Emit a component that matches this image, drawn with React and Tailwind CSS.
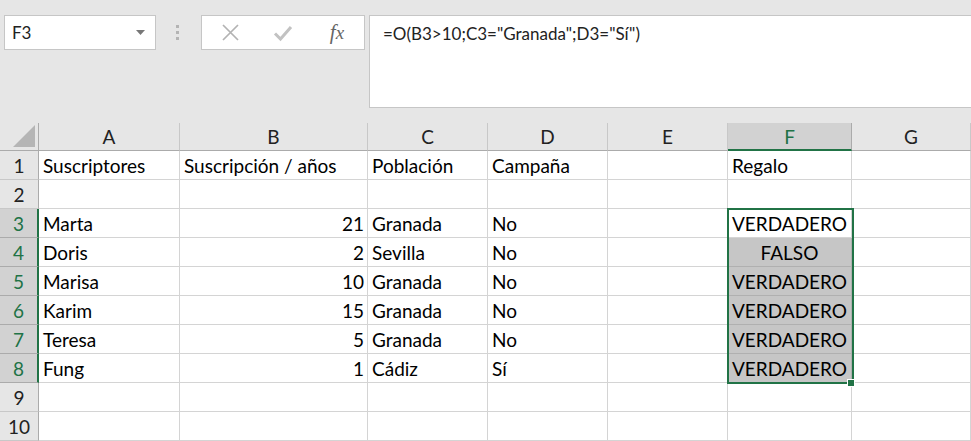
import React from 'react';

const cols = [
    { key: 'A', w: 'w-[141px]' },
    { key: 'B', w: 'w-[188px]' },
    { key: 'C', w: 'w-[120px]' },
    { key: 'D', w: 'w-[120px]' },
    { key: 'E', w: 'w-[120px]' },
    { key: 'F', w: 'w-[124px]' },
    { key: 'G', w: 'w-[119px]' },
];

const rows = [
    ['Suscriptores', 'Suscripción / años', 'Población', 'Campaña', '', 'Regalo', ''],
    ['', '', '', '', '', '', ''],
    ['Marta', 21, 'Granada', 'No', '', 'VERDADERO', ''],
    ['Doris', 2, 'Sevilla', 'No', '', 'FALSO', ''],
    ['Marisa', 10, 'Granada', 'No', '', 'VERDADERO', ''],
    ['Karim', 15, 'Granada', 'No', '', 'VERDADERO', ''],
    ['Teresa', 5, 'Granada', 'No', '', 'VERDADERO', ''],
    ['Fung', 1, 'Cádiz', 'Sí', '', 'VERDADERO', ''],
    ['', '', '', '', '', '', ''],
    ['', '', '', '', '', '', ''],
];

const inSelection = (r) => r >= 3 && r <= 8;

export default function App() {
    return (
        <div className="w-[971px] h-[441px] overflow-hidden bg-white font-['Lato','Liberation_Sans',sans-serif] text-black">
            {/* formula bar area */}
            <div className="h-[123px] bg-[#e6e6e6] flex items-start pt-[15px] pl-[4px]">
                <div className="w-[152px] h-[35px] bg-white border border-[#c6c6c6] flex items-center justify-between pl-[7px] pr-[10px]">
                    <span className="text-[17px] text-[#222]">F3</span>
                    <svg width="9" height="5" viewBox="0 0 9 5"><path d="M0 0h9L4.5 5z" fill="#777" /></svg>
                </div>
                <div className="w-[45px] h-[35px] flex flex-col items-center justify-center gap-[3px] pr-[2px]">
                    <div className="w-[3px] h-[3px] bg-[#b4b4b4]" />
                    <div className="w-[3px] h-[3px] bg-[#b4b4b4]" />
                    <div className="w-[3px] h-[3px] bg-[#b4b4b4]" />
                </div>
                <div className="w-[164px] h-[35px] bg-white border border-[#c6c6c6] flex items-center">
                    <div className="w-[54px] flex justify-center pl-[2px]">
                        <svg width="19" height="19" viewBox="0 0 19 19"><path d="M2 2L17 17M17 2L2 17" stroke="#b3b3b3" strokeWidth="1.7" /></svg>
                    </div>
                    <div className="w-[54px] flex justify-center">
                        <svg width="20" height="18" viewBox="0 0 20 18"><path d="M2 9.5L7.5 15L18 3" stroke="#c2c2c2" strokeWidth="3" fill="none" /></svg>
                    </div>
                    <div className="w-[54px] flex justify-center">
                        <span className="font-['Liberation_Serif',serif] italic text-[21px] text-[#666] leading-none">f<span className="text-[19px]">x</span></span>
                    </div>
                </div>
                <div className="ml-[4px] flex-1 h-[93px] bg-white border border-[#c6c6c6] border-r-0 pl-[13px] pt-[5px]">
                    <span className="text-[17px] text-[#222]">=O(B3&gt;10;C3="Granada";D3="Sí")</span>
                </div>
            </div>

            {/* grid */}
            <div className="relative">
                <div className="flex h-[28px] bg-[#e6e6e6]">
                    <div className="w-[39px] h-full border-r border-b border-[#ababab] relative overflow-hidden">
                        <svg className="absolute right-[3px] bottom-[3px]" width="22" height="22" viewBox="0 0 22 22"><path d="M22 0V22H0z" fill="#b5b5b5" /></svg>
                    </div>
                    {cols.map((c) => (
                        <div
                            key={c.key}
                            className={`${c.w} h-full flex items-center justify-center pt-[2px] text-[19px] border-r ${
                                c.key === 'F'
                                    ? 'bg-[#d2d2d2] text-[#217346] border-r-[#ababab] border-b-2 border-b-[#217346]'
                                    : 'text-[#222] border-r-[#c8c8c8] border-b border-b-[#ababab]'
                            }`}
                        >
                            {c.key}
                        </div>
                    ))}
                </div>
                {rows.map((row, i) => {
                    const r = i + 1;
                    const sel = inSelection(r);
                    return (
                        <div key={r} className="flex h-[29px]">
                            <div
                                className={`w-[39px] h-full flex items-center justify-center pt-[2px] text-[19px] border-b ${
                                    sel
                                        ? 'bg-[#d2d2d2] text-[#217346] border-b-[#ababab] border-r-2 border-r-[#217346]'
                                        : 'bg-[#e6e6e6] text-[#222] border-b-[#c8c8c8] border-r border-r-[#ababab]'
                                }`}
                            >
                                {r}
                            </div>
                            {cols.map((c, j) => {
                                const v = row[j];
                                const isF = c.key === 'F';
                                const gray = isF && r >= 4 && r <= 8;
                                const align =
                                    typeof v === 'number' ? 'justify-end pr-[3px]' : isF && r >= 3 ? 'justify-center' : 'justify-start pl-[4px]';
                                return (
                                    <div
                                        key={c.key}
                                        className={`${c.w} h-full flex items-center pt-[3px] ${align} text-[19px] border-r border-b ${
                                            gray ? 'bg-[#c6c6c6] border-[#b0b0b0]' : 'border-[#d4d4d4]'
                                        } whitespace-nowrap`}
                                    >
                                        {v}
                                    </div>
                                );
                            })}
                        </div>
                    );
                })}

                {/* selection outline F3:F8 */}
                <div className="absolute left-[727px] top-[85px] w-[127px] h-[176px] border-2 border-[#217346] pointer-events-none" />
                <div className="absolute left-[847px] top-[256px] w-[8px] h-[8px] bg-[#217346] border border-white" />
            </div>
        </div>
    );
}
